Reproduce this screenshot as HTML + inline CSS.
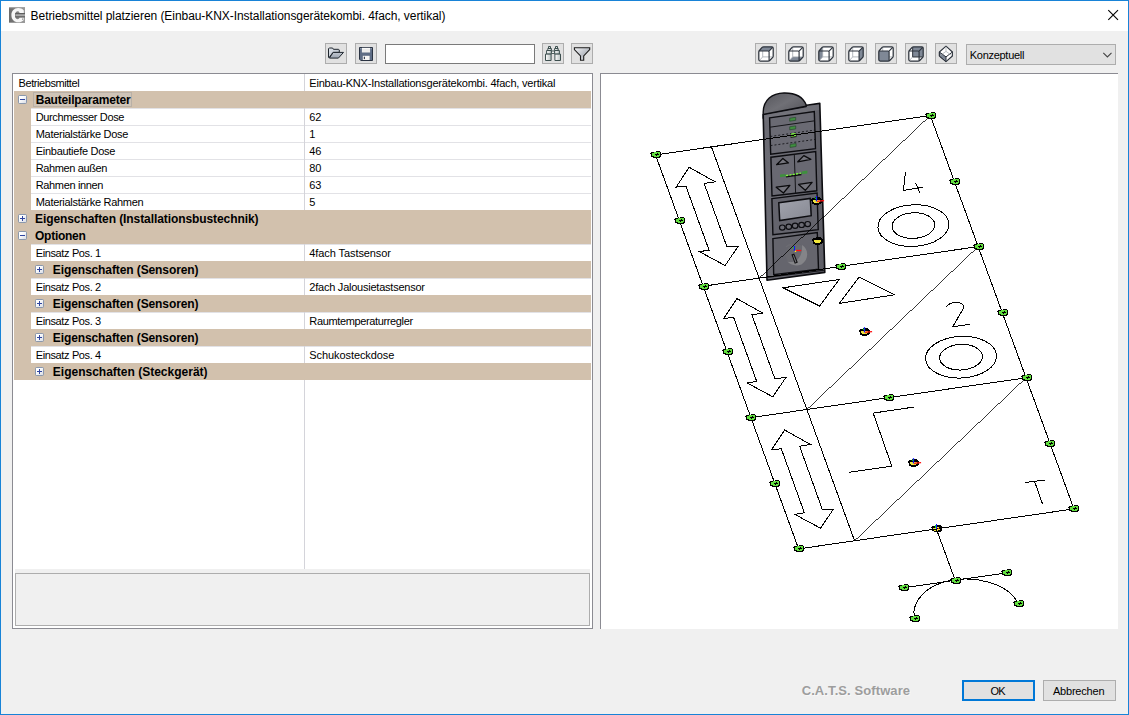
<!DOCTYPE html>
<html>
<head>
<meta charset="utf-8">
<title>Betriebsmittel platzieren</title>
<style>
html,body{margin:0;padding:0;}
body{width:1129px;height:715px;overflow:hidden;background:#f0f0f0;font-family:"Liberation Sans",sans-serif;font-size:11px;color:#000;position:relative;}
.abs{position:absolute;}
i{font-style:normal;display:block;}
#win{position:absolute;left:0;top:0;width:1127px;height:713px;border:1px solid #1883d7;background:#f0f0f0;}
#title{position:absolute;left:1px;top:1px;width:1127px;height:30px;background:#fff;}
#title .txt{position:absolute;left:29.6px;top:8px;font-size:12px;line-height:14px;white-space:nowrap;letter-spacing:-0.06px;}
.btn{position:absolute;box-sizing:border-box;background:#e1e1e1;border:1px solid #adadad;}
#grid{position:absolute;left:12px;top:73px;width:579px;height:554px;border:1px solid #8b8b92;background:#fff;}
#rows{position:absolute;left:0px;top:0;width:578px;height:495px;}
.row{position:absolute;left:0;width:578px;height:17px;line-height:17px;white-space:nowrap;font-size:11px;}
.cat{background:#d2c1ad;font-weight:bold;left:1px;width:577px;font-size:12px;}
.cat .lbl{margin-left:-1px;}
.cat .pm{margin-left:-1px;}
.lbl{position:absolute;top:1px;}
.val{position:absolute;left:296.3px;top:1px;}
.ind{position:absolute;left:1px;top:0;width:17px;height:17px;background:#d2c1ad;}
.gl{position:absolute;left:18px;top:0;width:560px;height:1px;background:#e2e2e6;}
.sp{position:absolute;left:291px;top:0;width:1px;height:17px;background:#d4d4da;}
.foc{position:absolute;left:19px;top:1px;width:97px;height:13px;border:1px solid #b9b0a6;background:#cfc4b7;}
.pm{position:absolute;width:7px;height:7px;border:1px solid #8a98ad;background:linear-gradient(135deg,#fff 30%,#d9dde6);top:4px;border-radius:1.5px;}
.pm:before{content:"";position:absolute;left:1px;top:3px;width:5px;height:1px;background:#2f45a0;}
.pm.plus:after{content:"";position:absolute;left:3px;top:1px;width:1px;height:5px;background:#2f45a0;}
#desc{position:absolute;left:2px;top:495px;width:575px;height:57px;background:#f0f0f0;}
#desc i{position:absolute;left:0;top:4px;width:573px;height:51px;border:1px solid #adadad;}
#view{position:absolute;left:600px;top:73px;width:518px;height:556px;background:#fff;border-left:1px solid #8b8b92;border-top:1px solid #8b8b92;box-sizing:border-box;overflow:hidden;}
</style>
</head>
<body>
<div id="win"></div>
<div id="title">
  <svg class="abs" style="left:8px;top:6px" width="16" height="16" viewBox="0 0 16 16">
    <defs><linearGradient id="tig" x1="0" y1="0" x2="1" y2="0"><stop offset="0" stop-color="#6b6b6b"/><stop offset="0.25" stop-color="#747474"/><stop offset="1" stop-color="#9b9b9b"/></linearGradient></defs>
    <rect x="0" y="0" width="16" height="16" fill="url(#tig)"/>
    <rect x="0" y="0" width="16" height="1.2" fill="#a4a4a4"/>
    <rect x="0" y="15" width="16" height="1" fill="#9a9a9a"/>
    <path d="M14.8 5.9 L14.8 3.4 C13.4 1.9 11.4 1.1 9.2 1.1 C5.2 1.1 2.4 4 2.4 8.2 C2.4 12.4 5.2 15.3 9.2 15.3 C11.4 15.3 13.4 14.5 14.8 13 L14.8 10.5 L10.6 10.5 C10.2 11.6 9.6 12.2 8.8 12.2 C7.2 12.2 6.1 10.6 6.1 8.2 C6.1 5.8 7.2 4.2 8.8 4.2 C9.6 4.2 10.2 4.8 10.6 5.9 Z" fill="#f6f6f6"/>
    <rect x="6.2" y="6" width="9.8" height="4.4" fill="#5e5e5e"/>
    <rect x="6.4" y="7.2" width="9.6" height="2" fill="#a9a9a9"/>
    <rect x="13.2" y="11.6" width="1" height="1" fill="#555"/>
  </svg>

  <div class="txt">Betriebsmittel platzieren (Einbau-KNX-Installationsgerätekombi. 4fach, vertikal)</div>
  <svg class="abs" style="left:1106px;top:8px" width="13" height="13" viewBox="0 0 13 13"><path d="M1.3 1.1 L11 10.9 M11 1.1 L1.3 10.9" stroke="#000" stroke-width="1.1" fill="none"/></svg>
</div>

<!-- toolbar left -->
<div class="btn" style="left:325px;top:43px;width:22px;height:21px"></div>
<div class="btn" style="left:355px;top:43px;width:22px;height:21px"></div>
<div class="abs" style="left:385px;top:44px;width:148px;height:18px;border:1px solid #7a7a7a;background:#fff"></div>
<div class="btn" style="left:542px;top:43px;width:22px;height:21px"></div>
<div class="btn" style="left:571px;top:43px;width:22px;height:21px"></div>
<!-- open folder -->
<svg class="abs" style="left:325px;top:43px" width="22" height="21" viewBox="0 0 22 21">
  <defs>
    <linearGradient id="fo1" x1="0" y1="0" x2="1" y2="1"><stop offset="0" stop-color="#e4e8ee"/><stop offset="1" stop-color="#aab2be"/></linearGradient>
    <linearGradient id="fo2" x1="0" y1="0" x2="0" y2="1"><stop offset="0" stop-color="#c3c9d2"/><stop offset="1" stop-color="#9aa3b0"/></linearGradient>
  </defs>
  <path d="M3.5 14.2 L3.5 5.7 L4.2 5 L7.6 5 L8.4 6.3 L13.6 6.3 L14.3 7 L14.3 9.4 L8 9.4 L3.9 14.8 Z" fill="url(#fo1)" stroke="#1f262e" stroke-width="1" stroke-linejoin="round"/>
  <path d="M4.4 15.1 L8.2 9.4 L18.5 9.4 L13.4 15.1 Z" fill="url(#fo2)" stroke="#1f262e" stroke-width="1" stroke-linejoin="round"/>
</svg>
<!-- save floppy -->
<svg class="abs" style="left:355px;top:43px" width="22" height="21" viewBox="0 0 22 21">
  <path d="M4.5 4.5 L17.5 4.5 L17.5 17.5 L5.8 17.5 L4.5 16.2 Z" fill="#5d6c85" stroke="#2a3342" stroke-width="1" stroke-linejoin="round"/>
  <rect x="6.9" y="4.9" width="8.2" height="4.6" fill="#ececec"/>
  <rect x="6.9" y="4.9" width="8.2" height="1" fill="#fbfbfb"/>
  <rect x="7.8" y="12.8" width="6.8" height="4.2" fill="#f5f5f5"/>
  <rect x="8.8" y="13.7" width="1.2" height="2.4" fill="#3a4252"/>
  <rect x="5.3" y="5.2" width="0.8" height="1" fill="#aeb7c6"/>
  <rect x="15.9" y="5.2" width="0.8" height="1" fill="#aeb7c6"/>
</svg>
<!-- binoculars -->
<svg class="abs" style="left:542px;top:43px" width="22" height="21" viewBox="0 0 22 21">
  <defs><linearGradient id="bn" x1="0" y1="0" x2="1" y2="0"><stop offset="0" stop-color="#ffffff"/><stop offset="1" stop-color="#b9c2c2"/></linearGradient></defs>
  <g stroke="#3d4f4f" stroke-width="1" fill="url(#bn)" stroke-linejoin="round">
    <rect x="6.5" y="3.5" width="2" height="2"/>
    <rect x="5.8" y="5.5" width="3.6" height="2"/>
    <rect x="4.6" y="7.5" width="4.8" height="3.6"/>
    <rect x="3.5" y="11.1" width="5.6" height="6.4"/>
    <rect x="13.5" y="3.5" width="2" height="2"/>
    <rect x="12.6" y="5.5" width="3.6" height="2"/>
    <rect x="12.6" y="7.5" width="4.8" height="3.6"/>
    <rect x="12.9" y="11.1" width="5.6" height="6.4"/>
    <rect x="9.4" y="8" width="3.2" height="2.4" fill="#fff"/>
  </g>
</svg>
<!-- filter funnel -->
<svg class="abs" style="left:571px;top:43px" width="22" height="21" viewBox="0 0 22 21">
  <defs><linearGradient id="fn" x1="0" y1="0" x2="1" y2="1"><stop offset="0" stop-color="#f4f5f7"/><stop offset="0.55" stop-color="#b9bdc4"/><stop offset="1" stop-color="#e6e8ea"/></linearGradient></defs>
  <path d="M3.4 4.7 L18.7 4.7 L18.7 6.6 L12.7 12.9 L12.7 17.3 L9.5 17.3 L9.5 12.9 L3.4 6.6 Z" fill="url(#fn)" stroke="#1c1c1c" stroke-width="1.1" stroke-linejoin="miter"/>
</svg>


<!-- toolbar right -->
<div class="btn" style="left:755px;top:43px;width:22px;height:21px"></div>
<svg class="abs" style="left:755px;top:43px" width="22" height="21" viewBox="0 0 22 21"><path d="M3.8 9.0 Q3.8 8.0 4.6 7.2 L7.1000000000000005 4.3999999999999995 Q7.7 3.8 8.7 3.8 L16.7 3.8 Q18.2 3.8 18.2 5.3 L18.2 12.9 Q18.2 13.9 17.5 14.6 L14.7 17.5 Q14.1 18.1 13.1 18.1 L5.3 18.1 Q3.8 18.1 3.8 16.6 Z" fill="#fff"/><path d="M7.7 4.8 L7.7 13.9 L17.2 13.9 M7.7 13.9 L4.6 17.3" stroke="#a2a7ae" stroke-width="0.8" fill="none"/><path d="M3.8 8.0 L7.7 3.8 L18.2 3.8 L14.1 8.0 Z" fill="#7f8896"/><path d="M3.8 9.0 Q3.8 8.0 4.6 7.2 L7.1000000000000005 4.3999999999999995 Q7.7 3.8 8.7 3.8 L16.7 3.8 Q18.2 3.8 18.2 5.3 L18.2 12.9 Q18.2 13.9 17.5 14.6 L14.7 17.5 Q14.1 18.1 13.1 18.1 L5.3 18.1 Q3.8 18.1 3.8 16.6 Z" fill="none" stroke="#2d333c" stroke-width="1.25"/><path d="M4.3 8.0 L13.1 8.0 Q14.1 8.0 14.1 9.0 L14.1 17.6 M13.799999999999999 8.3 L17.7 4.3" fill="none" stroke="#2d333c" stroke-width="1.15"/></svg>
<div class="btn" style="left:785px;top:43px;width:22px;height:21px"></div>
<svg class="abs" style="left:785px;top:43px" width="22" height="21" viewBox="0 0 22 21"><path d="M3.8 9.0 Q3.8 8.0 4.6 7.2 L7.1000000000000005 4.3999999999999995 Q7.7 3.8 8.7 3.8 L16.7 3.8 Q18.2 3.8 18.2 5.3 L18.2 12.9 Q18.2 13.9 17.5 14.6 L14.7 17.5 Q14.1 18.1 13.1 18.1 L5.3 18.1 Q3.8 18.1 3.8 16.6 Z" fill="#fff"/><path d="M3.8 18.1 L7.7 13.9 L18.2 13.9 L14.1 18.1 Z" fill="#7f8896"/><path d="M7.7 4.8 L7.7 13.9 L17.2 13.9 M7.7 13.9 L4.6 17.3" stroke="#a2a7ae" stroke-width="0.8" fill="none"/><path d="M3.8 9.0 Q3.8 8.0 4.6 7.2 L7.1000000000000005 4.3999999999999995 Q7.7 3.8 8.7 3.8 L16.7 3.8 Q18.2 3.8 18.2 5.3 L18.2 12.9 Q18.2 13.9 17.5 14.6 L14.7 17.5 Q14.1 18.1 13.1 18.1 L5.3 18.1 Q3.8 18.1 3.8 16.6 Z" fill="none" stroke="#2d333c" stroke-width="1.25"/><path d="M4.3 8.0 L13.1 8.0 Q14.1 8.0 14.1 9.0 L14.1 17.6 M13.799999999999999 8.3 L17.7 4.3" fill="none" stroke="#2d333c" stroke-width="1.15"/></svg>
<div class="btn" style="left:815px;top:43px;width:22px;height:21px"></div>
<svg class="abs" style="left:815px;top:43px" width="22" height="21" viewBox="0 0 22 21"><path d="M3.8 9.0 Q3.8 8.0 4.6 7.2 L7.1000000000000005 4.3999999999999995 Q7.7 3.8 8.7 3.8 L16.7 3.8 Q18.2 3.8 18.2 5.3 L18.2 12.9 Q18.2 13.9 17.5 14.6 L14.7 17.5 Q14.1 18.1 13.1 18.1 L5.3 18.1 Q3.8 18.1 3.8 16.6 Z" fill="#fff"/><path d="M3.8 8.0 L7.7 3.8 L7.7 13.9 L3.8 18.1 Z" fill="#7f8896"/><path d="M7.7 4.8 L7.7 13.9 L17.2 13.9 M7.7 13.9 L4.6 17.3" stroke="#a2a7ae" stroke-width="0.8" fill="none"/><path d="M3.8 9.0 Q3.8 8.0 4.6 7.2 L7.1000000000000005 4.3999999999999995 Q7.7 3.8 8.7 3.8 L16.7 3.8 Q18.2 3.8 18.2 5.3 L18.2 12.9 Q18.2 13.9 17.5 14.6 L14.7 17.5 Q14.1 18.1 13.1 18.1 L5.3 18.1 Q3.8 18.1 3.8 16.6 Z" fill="none" stroke="#2d333c" stroke-width="1.25"/><path d="M4.3 8.0 L13.1 8.0 Q14.1 8.0 14.1 9.0 L14.1 17.6 M13.799999999999999 8.3 L17.7 4.3" fill="none" stroke="#2d333c" stroke-width="1.15"/></svg>
<div class="btn" style="left:845px;top:43px;width:22px;height:21px"></div>
<svg class="abs" style="left:845px;top:43px" width="22" height="21" viewBox="0 0 22 21"><path d="M3.8 9.0 Q3.8 8.0 4.6 7.2 L7.1000000000000005 4.3999999999999995 Q7.7 3.8 8.7 3.8 L16.7 3.8 Q18.2 3.8 18.2 5.3 L18.2 12.9 Q18.2 13.9 17.5 14.6 L14.7 17.5 Q14.1 18.1 13.1 18.1 L5.3 18.1 Q3.8 18.1 3.8 16.6 Z" fill="#fff"/><path d="M7.7 4.8 L7.7 13.9 L17.2 13.9 M7.7 13.9 L4.6 17.3" stroke="#a2a7ae" stroke-width="0.8" fill="none"/><path d="M14.1 8.0 L18.2 3.8 L18.2 13.9 L14.1 18.1 Z" fill="#7f8896"/><path d="M3.8 9.0 Q3.8 8.0 4.6 7.2 L7.1000000000000005 4.3999999999999995 Q7.7 3.8 8.7 3.8 L16.7 3.8 Q18.2 3.8 18.2 5.3 L18.2 12.9 Q18.2 13.9 17.5 14.6 L14.7 17.5 Q14.1 18.1 13.1 18.1 L5.3 18.1 Q3.8 18.1 3.8 16.6 Z" fill="none" stroke="#2d333c" stroke-width="1.25"/><path d="M4.3 8.0 L13.1 8.0 Q14.1 8.0 14.1 9.0 L14.1 17.6 M13.799999999999999 8.3 L17.7 4.3" fill="none" stroke="#2d333c" stroke-width="1.15"/></svg>
<div class="btn" style="left:875px;top:43px;width:22px;height:21px"></div>
<svg class="abs" style="left:875px;top:43px" width="22" height="21" viewBox="0 0 22 21"><path d="M3.8 9.0 Q3.8 8.0 4.6 7.2 L7.1000000000000005 4.3999999999999995 Q7.7 3.8 8.7 3.8 L16.7 3.8 Q18.2 3.8 18.2 5.3 L18.2 12.9 Q18.2 13.9 17.5 14.6 L14.7 17.5 Q14.1 18.1 13.1 18.1 L5.3 18.1 Q3.8 18.1 3.8 16.6 Z" fill="#fff"/><path d="M7.7 4.8 L7.7 13.9 L17.2 13.9 M7.7 13.9 L4.6 17.3" stroke="#a2a7ae" stroke-width="0.8" fill="none"/><path d="M3.8 8.0 L14.1 8.0 L14.1 18.1 L3.8 18.1 Z" fill="#7f8896"/><path d="M3.8 9.0 Q3.8 8.0 4.6 7.2 L7.1000000000000005 4.3999999999999995 Q7.7 3.8 8.7 3.8 L16.7 3.8 Q18.2 3.8 18.2 5.3 L18.2 12.9 Q18.2 13.9 17.5 14.6 L14.7 17.5 Q14.1 18.1 13.1 18.1 L5.3 18.1 Q3.8 18.1 3.8 16.6 Z" fill="none" stroke="#2d333c" stroke-width="1.25"/><path d="M4.3 8.0 L13.1 8.0 Q14.1 8.0 14.1 9.0 L14.1 17.6 M13.799999999999999 8.3 L17.7 4.3" fill="none" stroke="#2d333c" stroke-width="1.15"/></svg>
<div class="btn" style="left:905px;top:43px;width:22px;height:21px"></div>
<svg class="abs" style="left:905px;top:43px" width="22" height="21" viewBox="0 0 22 21"><path d="M3.8 9.0 Q3.8 8.0 4.6 7.2 L7.1000000000000005 4.3999999999999995 Q7.7 3.8 8.7 3.8 L16.7 3.8 Q18.2 3.8 18.2 5.3 L18.2 12.9 Q18.2 13.9 17.5 14.6 L14.7 17.5 Q14.1 18.1 13.1 18.1 L5.3 18.1 Q3.8 18.1 3.8 16.6 Z" fill="#fff"/><path d="M7.7 3.8 L18.2 3.8 L18.2 13.9 L7.7 13.9 Z" fill="#7f8896"/><path d="M7.7 4.8 L7.7 13.9 L17.2 13.9 M7.7 13.9 L4.6 17.3" stroke="#a2a7ae" stroke-width="0.8" fill="none"/><path d="M3.8 9.0 Q3.8 8.0 4.6 7.2 L7.1000000000000005 4.3999999999999995 Q7.7 3.8 8.7 3.8 L16.7 3.8 Q18.2 3.8 18.2 5.3 L18.2 12.9 Q18.2 13.9 17.5 14.6 L14.7 17.5 Q14.1 18.1 13.1 18.1 L5.3 18.1 Q3.8 18.1 3.8 16.6 Z" fill="none" stroke="#2d333c" stroke-width="1.25"/><path d="M4.3 8.0 L13.1 8.0 Q14.1 8.0 14.1 9.0 L14.1 17.6 M13.799999999999999 8.3 L17.7 4.3" fill="none" stroke="#2d333c" stroke-width="1.15"/><path d="M7.7 4.3999999999999995 L7.7 13.9 L17.599999999999998 13.9" fill="none" stroke="#2d333c" stroke-width="1"/></svg>
<div class="btn" style="left:935px;top:43px;width:22px;height:21px"></div>
<svg class="abs" style="left:935px;top:43px" width="22" height="21" viewBox="0 0 22 21"><path d="M11 3.2 L17.4 9 L17.4 13 L11 18.7 L4.4 13 L4.4 9 Z" fill="#fff" stroke="#2d333c" stroke-width="1.1" stroke-linejoin="round"/><path d="M4.4 9 L11 13.9 L11 18.7 L4.4 13 Z" fill="#7f8896" stroke="#2d333c" stroke-width="1" stroke-linejoin="round"/><path d="M11 13.9 L17.4 9" stroke="#2d333c" stroke-width="1" fill="none"/><path d="M11 3.6 L11 8.4 L5 12.6 M11 8.4 L17 12.6" stroke="#a2a7ae" stroke-width="0.7" fill="none"/></svg>
<div class="btn" style="left:966px;top:44px;width:150px;height:21px"></div>
<div class="abs" style="left:969.8px;top:49px;font-size:11px;line-height:13px;letter-spacing:-0.29px;white-space:nowrap">Konzeptuell</div>
<svg class="abs" style="left:1102px;top:51px" width="11" height="8" viewBox="0 0 11 8"><path d="M1.3 1.8 L5.4 5.9 L9.5 1.8" stroke="#444" stroke-width="1.1" fill="none"/></svg>

<!-- grid -->
<div id="grid">
<div id="rows">
<div class="row" style="top:0px"><span class="lbl" style="left:5.6px;letter-spacing:-0.431px">Betriebsmittel</span><i class="sp"></i><span class="val" style="letter-spacing:-0.210px">Einbau-KNX-Installationsgerätekombi. 4fach, vertikal</span></div>
<div class="row cat" style="top:17px"><i class="pm minus" style="left:5px"></i><i class="foc"></i><span class="lbl" style="left:22.7px;letter-spacing:-0.203px">Bauteilparameter</span></div>
<div class="row" style="top:34px"><i class="ind"></i><i class="gl"></i><span class="lbl" style="left:22.7px;letter-spacing:-0.359px">Durchmesser Dose</span><i class="sp"></i><span class="val" style="letter-spacing:-0.225px">62</span></div>
<div class="row" style="top:51px"><i class="ind"></i><i class="gl"></i><span class="lbl" style="left:22.7px;letter-spacing:-0.286px">Materialstärke Dose</span><i class="sp"></i><span class="val" style="letter-spacing:-0.380px">1</span></div>
<div class="row" style="top:68px"><i class="ind"></i><i class="gl"></i><span class="lbl" style="left:22.7px;letter-spacing:-0.268px">Einbautiefe Dose</span><i class="sp"></i><span class="val" style="letter-spacing:-0.225px">46</span></div>
<div class="row" style="top:85px"><i class="ind"></i><i class="gl"></i><span class="lbl" style="left:22.7px;letter-spacing:-0.377px">Rahmen außen</span><i class="sp"></i><span class="val" style="letter-spacing:-0.225px">80</span></div>
<div class="row" style="top:102px"><i class="ind"></i><i class="gl"></i><span class="lbl" style="left:22.7px;letter-spacing:-0.347px">Rahmen innen</span><i class="sp"></i><span class="val" style="letter-spacing:-0.225px">63</span></div>
<div class="row" style="top:119px"><i class="ind"></i><i class="gl"></i><span class="lbl" style="left:22.7px;letter-spacing:-0.287px">Materialstärke Rahmen</span><i class="sp"></i><span class="val" style="letter-spacing:-0.380px">5</span></div>
<div class="row cat" style="top:136px"><i class="pm plus" style="left:5px"></i><span class="lbl" style="left:22.0px;letter-spacing:-0.085px">Eigenschaften (Installationsbustechnik)</span></div>
<div class="row cat" style="top:153px"><i class="pm minus" style="left:5px"></i><span class="lbl" style="left:22.0px;letter-spacing:-0.259px">Optionen</span></div>
<div class="row" style="top:170px"><i class="ind"></i><i class="gl"></i><span class="lbl" style="left:22.7px;letter-spacing:-0.366px">Einsatz Pos. 1</span><i class="sp"></i><span class="val" style="letter-spacing:-0.086px">4fach Tastsensor</span></div>
<div class="row cat" style="top:187px"><i class="pm plus" style="left:22px"></i><span class="lbl" style="left:39.8px;letter-spacing:-0.101px">Eigenschaften (Sensoren)</span></div>
<div class="row" style="top:204px"><i class="ind"></i><i class="gl"></i><span class="lbl" style="left:22.7px;letter-spacing:-0.366px">Einsatz Pos. 2</span><i class="sp"></i><span class="val" style="letter-spacing:-0.232px">2fach Jalousietastsensor</span></div>
<div class="row cat" style="top:221px"><i class="pm plus" style="left:22px"></i><span class="lbl" style="left:39.8px;letter-spacing:-0.101px">Eigenschaften (Sensoren)</span></div>
<div class="row" style="top:238px"><i class="ind"></i><i class="gl"></i><span class="lbl" style="left:22.7px;letter-spacing:-0.366px">Einsatz Pos. 3</span><i class="sp"></i><span class="val" style="letter-spacing:-0.363px">Raumtemperaturregler</span></div>
<div class="row cat" style="top:255px"><i class="pm plus" style="left:22px"></i><span class="lbl" style="left:39.8px;letter-spacing:-0.101px">Eigenschaften (Sensoren)</span></div>
<div class="row" style="top:272px"><i class="ind"></i><i class="gl"></i><span class="lbl" style="left:22.7px;letter-spacing:-0.366px">Einsatz Pos. 4</span><i class="sp"></i><span class="val" style="letter-spacing:-0.081px">Schukosteckdose</span></div>
<div class="row cat" style="top:289px"><i class="pm plus" style="left:22px"></i><span class="lbl" style="left:39.8px;letter-spacing:0.003px">Eigenschaften (Steckgerät)</span></div>
<i class="sp" style="top:306px;height:189px"></i>
</div>
<div id="desc"><i></i></div>
</div>

<!-- 3d view -->
<div id="view">
<svg class="abs" style="left:-1px;top:-1px" width="518" height="556" viewBox="600 73 518 556">
<defs><linearGradient id="dg" x1="0" y1="0" x2="1" y2="0"><stop offset="0" stop-color="#6c6c74"/><stop offset="0.5" stop-color="#6a6a72"/><stop offset="1" stop-color="#5e5e66"/></linearGradient><linearGradient id="dome" x1="0" y1="0" x2="1" y2="1"><stop offset="0" stop-color="#55555b"/><stop offset="0.45" stop-color="#707076"/><stop offset="1" stop-color="#4c4c52"/></linearGradient><linearGradient id="lcd" x1="0" y1="0" x2="1" y2="1"><stop offset="0" stop-color="#a2a4ae"/><stop offset="1" stop-color="#868892"/></linearGradient></defs>
<g shape-rendering="auto">
<path d="M763.2 118 L763.2 112 C763.5 100 772 93.2 784 93 C795 92.8 803 97 806.2 105 L806.4 112 Z" fill="url(#dome)" stroke="#0c0c10" stroke-width="1.4"/>
<path d="M763.2 114.5 L806.2 106.4 L806.6 105.2 L819.8 103.4 L824.8 272.4 L767 280.2 Z" fill="url(#dg)" stroke="#0c0c10" stroke-width="1.6" stroke-linejoin="round"/>
<path d="M764.4 115.2 L806.4 107.4 L807 106 L818.8 104.4 L819 110 L768.6 117.4 L768.8 120 L764.6 120.6 Z" fill="#7a7a82" opacity="0.55"/>
<path d="M767 277.4 L824.7 270.2" stroke="#141418" stroke-width="1.2" fill="none"/>
<path d="M769.6 117.9 L814.3 111.6 L815.5 148.6 L770.7 154.2 Z" fill="#6a6a73" stroke="#0c0c10" stroke-width="1.4"/>
<path d="M770.0 127.2 L814.7 120.8" stroke="#141418" stroke-width="1" fill="none"/>
<path d="M770.3 136.5 L815 130.0" stroke="#141418" stroke-width="0.9" stroke-dasharray="2 2" fill="none"/>
<path d="M770.5 145.6 L815.3 139.4" stroke="#141418" stroke-width="0.9" stroke-dasharray="2 2" fill="none"/>
<path d="M789.7 118.2 L795.7 117.3 L795.7 120.3 L789.7 121.2 Z" fill="#3f8f3f" stroke="#24402a" stroke-width="0.6"/>
<path d="M789.7 126.8 L795.7 125.89999999999999 L795.7 128.9 L789.7 129.8 Z" fill="#3f8f3f" stroke="#24402a" stroke-width="0.6"/>
<path d="M790.1 144.4 L796.1 143.5 L796.1 146.5 L790.1 147.4 Z" fill="#3f8f3f" stroke="#24402a" stroke-width="0.6"/>
<path d="M790.6 134.4 L796.6 133.4 L796.6 137 L790.6 138 Z" fill="#1c1c1c"/>
<path d="M791 134.2 L795.6 133.6 M791.2 136.2 L796 135.5" stroke="#7dff3a" stroke-width="1.2" fill="none"/>
<path d="M770.9 157.2 L815.7 151.6 L816.8 190.8 L772 196.0 Z" fill="#696972" stroke="#0c0c10" stroke-width="1.4"/>
<path d="M794.3 154.4 L795.6 193.4" stroke="#141418" stroke-width="1" fill="none"/>
<path d="M776.6 164.7 L782.9 158.4 L788.5 162.9 Z" fill="#74747c" stroke="#0a0a0c" stroke-width="1.3" stroke-linejoin="round"/>
<path d="M797.8 161.8 L803.8 155.6 L810.8 159.4 Z" fill="#74747c" stroke="#0a0a0c" stroke-width="1.3" stroke-linejoin="round"/>
<path d="M776.2 187.2 L789.9 185.4 L783.4 193 Z" fill="#74747c" stroke="#0a0a0c" stroke-width="1.3" stroke-linejoin="round"/>
<path d="M798.6 184.4 L812.1 182.3 L805.3 190.3 Z" fill="#74747c" stroke="#0a0a0c" stroke-width="1.3" stroke-linejoin="round"/>
<path d="M780 174.6 L785.6 173.9 L785.6 176.6 L780 177.3 Z" fill="#3f8f3f"/>
<path d="M801.6 171.4 L807.4 170.6 L807.4 173.4 L801.6 174.2 Z" fill="#3f8f3f"/>
<path d="M786 176.8 L801.4 174.4" stroke="#0a0a0c" stroke-width="1.6" fill="none"/>
<path d="M786 175.6 L801 173.2" stroke="#7dff3a" stroke-width="1.3" stroke-dasharray="2.2 1.2" fill="none"/>
<path d="M771.9 198.6 L817.1 193 L818.2 229.7 L772.9 234.8 Z" fill="#64646d" stroke="#0c0c10" stroke-width="1.4"/>
<path d="M778.8 202.8 L810.3 198.4 L811.2 215.7 L779.7 220.6 Z" fill="url(#lcd)" stroke="#0c0c10" stroke-width="1.5"/>
<ellipse cx="782.3" cy="227.6" rx="2.8" ry="2.6" fill="#6a6a72" stroke="#0c0c10" stroke-width="1.2"/>
<ellipse cx="788.8" cy="226.7" rx="2.8" ry="2.6" fill="#6a6a72" stroke="#0c0c10" stroke-width="1.2"/>
<ellipse cx="795.1" cy="225.8" rx="2.8" ry="2.6" fill="#6a6a72" stroke="#0c0c10" stroke-width="1.2"/>
<ellipse cx="801.6" cy="224.9" rx="2.8" ry="2.6" fill="#6a6a72" stroke="#0c0c10" stroke-width="1.2"/>
<ellipse cx="807.7" cy="224.1" rx="2.8" ry="2.6" fill="#6a6a72" stroke="#0c0c10" stroke-width="1.2"/>
<path d="M772.9 238.6 L817.3 232.5 L818.5 269.3 L773.7 274.8 Z" fill="#65656d" stroke="#0c0c10" stroke-width="1.4"/>
<ellipse cx="796.3" cy="254.6" rx="10.8" ry="10.4" fill="#69696f"/>
<path d="M802 245 C809 249 809 260 801.5 264.4 C796 266.6 790 265 787.4 261.6 C795 264 803 258 802 245 Z" fill="#848488"/>
<path d="M791.4 254.4 L794.2 253.6 L797.8 262.6 L794.8 263.8 Z" fill="#101012"/><path d="M792.9 255.4 L793.7 255.1 L796.4 262 L795.4 262.4 Z" fill="#77777c"/>

<path d="M786 247 C788 245 790 244.4 792 244.6" stroke="#6c6c72" stroke-width="1.4" fill="none"/>
</g>
<g fill="none" stroke="#000" stroke-width="1" shape-rendering="crispEdges">
<path d="M655.5 154.9 L930.3 115.5 L1073.9 508.9 L798.6 548.9 Z"/>
<path d="M703.2 286.2 L978.2 246.6 M750.9 417.6 L1026.0 377.8"/>
<path d="M711.4 146.9 L854.6 540.8"/>
<path d="M689.2 167.3 L715.1 181.8 L704.2 183.5 L727.0 247.0 L738.0 246.5 L725.1 265.5 L699.4 251.7 L709.0 250.1 L685.9 186.1 L676.1 187.1 Z"/>
<path d="M736.9 298.6 L762.8 313.1 L751.9 314.8 L774.7 378.3 L785.7 377.8 L772.8 396.8 L747.1 383.0 L756.7 381.4 L733.6 317.4 L723.8 318.4 Z"/>
<path d="M784.6 430.0 L810.5 444.5 L799.6 446.2 L822.4 509.7 L833.4 509.2 L820.5 528.2 L794.8 514.4 L804.4 512.8 L781.3 448.8 L771.5 449.8 Z"/>
<path d="M905.5 172.2 L903.4 190.4 L923 187.3 M915.8 183.3 L919.7 192.6"/>
<path d="M783.2 287.8 L839.1 279.5 L819.6 306.1 Z"/>
<path d="M859.1 276.9 L894.5 294.8 L839.4 303.4 Z"/>
<path d="M946.4 306.6 C949 303.2 953 302.2 957 302.4 C961.5 302.8 964.6 304.6 963.9 307.4 L952.7 326.9 L969.9 324.2"/>
<path d="M913.6 407.1 L873.2 413.1 L891.8 466.1 L849.4 472.3"/>
<path d="M1024.6 482.6 L1044.8 480.0 M1034.6 481.6 L1042.5 503.8"/>
<path d="M936.2 528.6 L955.1 580.0"/>
<path d="M903.6 587.8 L1006.4 572.9"/>
<path d="M914.2 617.5 C911.6 601 926 585.5 950 580.4 C975 575.6 1007 583 1017.6 602.4"/>
<path d="M759.2 278.2 L930.3 115.5 M806.9 409.5 L978.2 246.6 M854.6 540.8 L1026.0 377.8" stroke-width="0.78"/>
<ellipse cx="913.4" cy="225.6" rx="35.5" ry="20.8" transform="rotate(-3 913.4 225.6)"/>
<ellipse cx="913.4" cy="225.6" rx="21.4" ry="12.8" transform="rotate(-3 913.4 225.6)"/>
<ellipse cx="961" cy="357.2" rx="35.5" ry="20.8" transform="rotate(-3 961 357.2)"/>
<ellipse cx="961" cy="357.2" rx="21.4" ry="12.8" transform="rotate(-3 961 357.2)"/>
</g>
<g shape-rendering="crispEdges" transform="translate(655,154)"><path d="M1 -3 H5 V-2 H6 V3 H5 V4 H-2 V3 H-4 V0 H-5 V-1 H-4 V-2 H1 Z" fill="#000"/><path d="M-3 -1 H-1 V-2 H5 V2 H4 V3 H-1 V2 H-3 Z" fill="#62e040"/><path d="M0 0 H2 V-1 H3 V0 H4 V1 H2 V2 H1 V1 H0 Z" fill="#000"/></g>
<g shape-rendering="crispEdges" transform="translate(930,115)"><path d="M1 -3 H5 V-2 H6 V3 H5 V4 H-2 V3 H-4 V0 H-5 V-1 H-4 V-2 H1 Z" fill="#000"/><path d="M-3 -1 H-1 V-2 H5 V2 H4 V3 H-1 V2 H-3 Z" fill="#62e040"/><path d="M0 0 H2 V-1 H3 V0 H4 V1 H2 V2 H1 V1 H0 Z" fill="#000"/></g>
<g shape-rendering="crispEdges" transform="translate(1073,508)"><path d="M1 -3 H5 V-2 H6 V3 H5 V4 H-2 V3 H-4 V0 H-5 V-1 H-4 V-2 H1 Z" fill="#000"/><path d="M-3 -1 H-1 V-2 H5 V2 H4 V3 H-1 V2 H-3 Z" fill="#62e040"/><path d="M0 0 H2 V-1 H3 V0 H4 V1 H2 V2 H1 V1 H0 Z" fill="#000"/></g>
<g shape-rendering="crispEdges" transform="translate(798,548)"><path d="M1 -3 H5 V-2 H6 V3 H5 V4 H-2 V3 H-4 V0 H-5 V-1 H-4 V-2 H1 Z" fill="#000"/><path d="M-3 -1 H-1 V-2 H5 V2 H4 V3 H-1 V2 H-3 Z" fill="#62e040"/><path d="M0 0 H2 V-1 H3 V0 H4 V1 H2 V2 H1 V1 H0 Z" fill="#000"/></g>
<g shape-rendering="crispEdges" transform="translate(703,286)"><path d="M1 -3 H5 V-2 H6 V3 H5 V4 H-2 V3 H-4 V0 H-5 V-1 H-4 V-2 H1 Z" fill="#000"/><path d="M-3 -1 H-1 V-2 H5 V2 H4 V3 H-1 V2 H-3 Z" fill="#62e040"/><path d="M0 0 H2 V-1 H3 V0 H4 V1 H2 V2 H1 V1 H0 Z" fill="#000"/></g>
<g shape-rendering="crispEdges" transform="translate(750,417)"><path d="M1 -3 H5 V-2 H6 V3 H5 V4 H-2 V3 H-4 V0 H-5 V-1 H-4 V-2 H1 Z" fill="#000"/><path d="M-3 -1 H-1 V-2 H5 V2 H4 V3 H-1 V2 H-3 Z" fill="#62e040"/><path d="M0 0 H2 V-1 H3 V0 H4 V1 H2 V2 H1 V1 H0 Z" fill="#000"/></g>
<g shape-rendering="crispEdges" transform="translate(978,246)"><path d="M1 -3 H5 V-2 H6 V3 H5 V4 H-2 V3 H-4 V0 H-5 V-1 H-4 V-2 H1 Z" fill="#000"/><path d="M-3 -1 H-1 V-2 H5 V2 H4 V3 H-1 V2 H-3 Z" fill="#62e040"/><path d="M0 0 H2 V-1 H3 V0 H4 V1 H2 V2 H1 V1 H0 Z" fill="#000"/></g>
<g shape-rendering="crispEdges" transform="translate(1026,377)"><path d="M1 -3 H5 V-2 H6 V3 H5 V4 H-2 V3 H-4 V0 H-5 V-1 H-4 V-2 H1 Z" fill="#000"/><path d="M-3 -1 H-1 V-2 H5 V2 H4 V3 H-1 V2 H-3 Z" fill="#62e040"/><path d="M0 0 H2 V-1 H3 V0 H4 V1 H2 V2 H1 V1 H0 Z" fill="#000"/></g>
<g shape-rendering="crispEdges" transform="translate(679,220)"><path d="M1 -3 H5 V-2 H6 V3 H5 V4 H-2 V3 H-4 V0 H-5 V-1 H-4 V-2 H1 Z" fill="#000"/><path d="M-3 -1 H-1 V-2 H5 V2 H4 V3 H-1 V2 H-3 Z" fill="#62e040"/><path d="M0 0 H2 V-1 H3 V0 H4 V1 H2 V2 H1 V1 H0 Z" fill="#000"/></g>
<g shape-rendering="crispEdges" transform="translate(727,351)"><path d="M1 -3 H5 V-2 H6 V3 H5 V4 H-2 V3 H-4 V0 H-5 V-1 H-4 V-2 H1 Z" fill="#000"/><path d="M-3 -1 H-1 V-2 H5 V2 H4 V3 H-1 V2 H-3 Z" fill="#62e040"/><path d="M0 0 H2 V-1 H3 V0 H4 V1 H2 V2 H1 V1 H0 Z" fill="#000"/></g>
<g shape-rendering="crispEdges" transform="translate(774,483)"><path d="M1 -3 H5 V-2 H6 V3 H5 V4 H-2 V3 H-4 V0 H-5 V-1 H-4 V-2 H1 Z" fill="#000"/><path d="M-3 -1 H-1 V-2 H5 V2 H4 V3 H-1 V2 H-3 Z" fill="#62e040"/><path d="M0 0 H2 V-1 H3 V0 H4 V1 H2 V2 H1 V1 H0 Z" fill="#000"/></g>
<g shape-rendering="crispEdges" transform="translate(954,181)"><path d="M1 -3 H5 V-2 H6 V3 H5 V4 H-2 V3 H-4 V0 H-5 V-1 H-4 V-2 H1 Z" fill="#000"/><path d="M-3 -1 H-1 V-2 H5 V2 H4 V3 H-1 V2 H-3 Z" fill="#62e040"/><path d="M0 0 H2 V-1 H3 V0 H4 V1 H2 V2 H1 V1 H0 Z" fill="#000"/></g>
<g shape-rendering="crispEdges" transform="translate(1002,312)"><path d="M1 -3 H5 V-2 H6 V3 H5 V4 H-2 V3 H-4 V0 H-5 V-1 H-4 V-2 H1 Z" fill="#000"/><path d="M-3 -1 H-1 V-2 H5 V2 H4 V3 H-1 V2 H-3 Z" fill="#62e040"/><path d="M0 0 H2 V-1 H3 V0 H4 V1 H2 V2 H1 V1 H0 Z" fill="#000"/></g>
<g shape-rendering="crispEdges" transform="translate(1049,443)"><path d="M1 -3 H5 V-2 H6 V3 H5 V4 H-2 V3 H-4 V0 H-5 V-1 H-4 V-2 H1 Z" fill="#000"/><path d="M-3 -1 H-1 V-2 H5 V2 H4 V3 H-1 V2 H-3 Z" fill="#62e040"/><path d="M0 0 H2 V-1 H3 V0 H4 V1 H2 V2 H1 V1 H0 Z" fill="#000"/></g>
<g shape-rendering="crispEdges" transform="translate(840,266)"><path d="M1 -3 H5 V-2 H6 V3 H5 V4 H-2 V3 H-4 V0 H-5 V-1 H-4 V-2 H1 Z" fill="#000"/><path d="M-3 -1 H-1 V-2 H5 V2 H4 V3 H-1 V2 H-3 Z" fill="#62e040"/><path d="M0 0 H2 V-1 H3 V0 H4 V1 H2 V2 H1 V1 H0 Z" fill="#000"/></g>
<g shape-rendering="crispEdges" transform="translate(888,397)"><path d="M1 -3 H5 V-2 H6 V3 H5 V4 H-2 V3 H-4 V0 H-5 V-1 H-4 V-2 H1 Z" fill="#000"/><path d="M-3 -1 H-1 V-2 H5 V2 H4 V3 H-1 V2 H-3 Z" fill="#62e040"/><path d="M0 0 H2 V-1 H3 V0 H4 V1 H2 V2 H1 V1 H0 Z" fill="#000"/></g>
<g shape-rendering="crispEdges" transform="translate(955,580)"><path d="M1 -3 H5 V-2 H6 V3 H5 V4 H-2 V3 H-4 V0 H-5 V-1 H-4 V-2 H1 Z" fill="#000"/><path d="M-3 -1 H-1 V-2 H5 V2 H4 V3 H-1 V2 H-3 Z" fill="#62e040"/><path d="M0 0 H2 V-1 H3 V0 H4 V1 H2 V2 H1 V1 H0 Z" fill="#000"/></g>
<g shape-rendering="crispEdges" transform="translate(903,587)"><path d="M1 -3 H5 V-2 H6 V3 H5 V4 H-2 V3 H-4 V0 H-5 V-1 H-4 V-2 H1 Z" fill="#000"/><path d="M-3 -1 H-1 V-2 H5 V2 H4 V3 H-1 V2 H-3 Z" fill="#62e040"/><path d="M0 0 H2 V-1 H3 V0 H4 V1 H2 V2 H1 V1 H0 Z" fill="#000"/></g>
<g shape-rendering="crispEdges" transform="translate(1006,572)"><path d="M1 -3 H5 V-2 H6 V3 H5 V4 H-2 V3 H-4 V0 H-5 V-1 H-4 V-2 H1 Z" fill="#000"/><path d="M-3 -1 H-1 V-2 H5 V2 H4 V3 H-1 V2 H-3 Z" fill="#62e040"/><path d="M0 0 H2 V-1 H3 V0 H4 V1 H2 V2 H1 V1 H0 Z" fill="#000"/></g>
<g shape-rendering="crispEdges" transform="translate(914,618)"><path d="M1 -3 H5 V-2 H6 V3 H5 V4 H-2 V3 H-4 V0 H-5 V-1 H-4 V-2 H1 Z" fill="#000"/><path d="M-3 -1 H-1 V-2 H5 V2 H4 V3 H-1 V2 H-3 Z" fill="#62e040"/><path d="M0 0 H2 V-1 H3 V0 H4 V1 H2 V2 H1 V1 H0 Z" fill="#000"/></g>
<g shape-rendering="crispEdges" transform="translate(1018,603)"><path d="M1 -3 H5 V-2 H6 V3 H5 V4 H-2 V3 H-4 V0 H-5 V-1 H-4 V-2 H1 Z" fill="#000"/><path d="M-3 -1 H-1 V-2 H5 V2 H4 V3 H-1 V2 H-3 Z" fill="#62e040"/><path d="M0 0 H2 V-1 H3 V0 H4 V1 H2 V2 H1 V1 H0 Z" fill="#000"/></g>
<g shape-rendering="crispEdges" transform="translate(864,331)"><path d="M-1 -3 H4 V-2 H5 V-1 H6 V3 H5 V4 H3 V5 H-2 V4 H-4 V1 H-5 V-1 H-4 V-2 H-1 Z" fill="#000"/><path d="M-3 0 H4 V2 H3 V3 H-2 V2 H-3 Z" fill="#f2e73a"/></g>
<path d="M864.5 332.4 L864.5 327.2" stroke="#1010ff" stroke-width="1.3" fill="none"/>
<circle cx="863.5" cy="329.2" r="0.8" fill="#10e010"/>
<path d="M865.3 332.9 L866.5 332.2 L872.1 331.7" stroke="#ff1010" stroke-width="1.3" fill="none"/>
<g shape-rendering="crispEdges" transform="translate(913,462)"><path d="M-1 -3 H4 V-2 H5 V-1 H6 V3 H5 V4 H3 V5 H-2 V4 H-4 V1 H-5 V-1 H-4 V-2 H-1 Z" fill="#000"/><path d="M-3 0 H4 V2 H3 V3 H-2 V2 H-3 Z" fill="#f2e73a"/></g>
<path d="M913.5 463.4 L913.5 458.2" stroke="#1010ff" stroke-width="1.3" fill="none"/>
<circle cx="912.5" cy="460.2" r="0.8" fill="#10e010"/>
<path d="M914.3 463.9 L915.5 463.2 L921.1 462.7" stroke="#ff1010" stroke-width="1.3" fill="none"/>
<g shape-rendering="crispEdges" transform="translate(816,200)"><path d="M-1 -3 H4 V-2 H5 V-1 H6 V3 H5 V4 H3 V5 H-2 V4 H-4 V1 H-5 V-1 H-4 V-2 H-1 Z" fill="#000"/><path d="M-3 0 H4 V2 H3 V3 H-2 V2 H-3 Z" fill="#f2e73a"/></g>
<path d="M816.5 201.39999999999998 L816.5 196.2" stroke="#1010ff" stroke-width="1.3" fill="none"/>
<circle cx="815.5" cy="198.2" r="0.8" fill="#10e010"/>
<path d="M817.3 201.89999999999998 L818.5 201.2 L824.1 200.7" stroke="#ff1010" stroke-width="1.3" fill="none"/>
<g shape-rendering="crispEdges" transform="translate(817,240)"><path d="M-1 -3 H4 V-2 H5 V-1 H6 V3 H5 V4 H3 V5 H-2 V4 H-4 V1 H-5 V-1 H-4 V-2 H-1 Z" fill="#000"/><path d="M-3 0 H4 V2 H3 V3 H-2 V2 H-3 Z" fill="#f2e73a"/></g>
<g shape-rendering="crispEdges"><path transform="translate(936,528)" d="M1 -3 H5 V-2 H6 V3 H5 V4 H-2 V3 H-4 V0 H-5 V-1 H-4 V-2 H1 Z" fill="#000"/><path d="M933 528 h3 v1 h-3 Z M934 530 h2 v1 h-2 Z M937 527 h2 v1 h-2 Z M937 529 h3 v1 h-2 v1 h-1 Z" fill="#f2e73a"/><rect x="936" y="524" width="1" height="5" fill="#1010ff"/><rect x="935" y="525" width="1" height="3" fill="#10e010"/><rect x="938" y="528" width="1" height="1" fill="#ff1010"/></g>
<path d="M794.4 250.8 L794.4 246" stroke="#1010ff" stroke-width="1.3" fill="none"/><rect x="792.9" y="247" width="1" height="1.6" fill="#10e010"/><path d="M796 250.5 L801.2 250.5" stroke="#ff1010" stroke-width="1.3" fill="none"/><rect x="794.8" y="250.6" width="1.4" height="1.4" fill="#ffe81a"/>
<path d="M808.6 198.8 L819 198" stroke="none"/>
</svg>
</div>

<!-- bottom -->
<div class="abs" style="left:801.7px;top:683px;font-weight:bold;font-size:13px;line-height:15px;color:#9d9d9d;white-space:nowrap;letter-spacing:0.09px;text-shadow:1px 1px 0 #f8f8f8" id="cats">C.A.T.S. Software</div>
<div class="btn" style="left:962px;top:680px;width:73px;height:21px;border:2px solid #0078d7"></div>
<div class="abs" id="oktxt" style="left:990.4px;top:685px;font-size:11px;line-height:13px;letter-spacing:-0.8px;white-space:nowrap">OK</div>
<div class="btn" style="left:1043px;top:680px;width:73px;height:21px"></div>
<div class="abs" id="abtxt" style="left:1052.9px;top:685px;font-size:11px;line-height:13px;letter-spacing:-0.19px;white-space:nowrap">Abbrechen</div>
</body>
</html>
